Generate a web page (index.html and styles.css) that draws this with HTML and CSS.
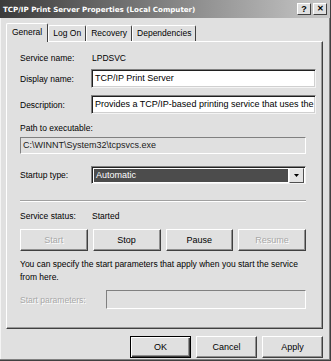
FILE: index.html
```html
<!DOCTYPE html>
<html lang="en">
<head>
    <meta charset="UTF-8">
    <meta name="viewport" content="width=device-width, initial-scale=1.0">
    <title>TCP/IP Print Server Properties</title>
    <link rel="stylesheet" href="styles.css">
</head>
<body>
    <div class="window">
        <div class="titlebar">
            <span class="title">TCP/IP Print Server Properties (Local Computer)</span>
            <div class="title-btns">
                <span class="tbtn">?</span>
                <span class="tbtn close">&#x2715;</span>
            </div>
        </div>

        <div class="tabs">
            <span class="tab active">General</span>
            <span class="tab">Log On</span>
            <span class="tab">Recovery</span>
            <span class="tab">Dependencies</span>
        </div>

        <div class="panel">
            <div class="row first">
                <span class="label">Service name:</span>
                <span class="value">LPDSVC</span>
            </div>
            <div class="row r-display">
                <span class="label">Display name:</span>
                <div class="field">TCP/IP Print Server</div>
            </div>
            <div class="row r-desc">
                <span class="label">Description:</span>
                <div class="field">Provides a TCP/IP-based printing service that uses the</div>
            </div>
            <div class="path-label">Path to executable:</div>
            <div class="field readonly">C:\WINNT\System32\tcpsvcs.exe</div>

            <div class="row r-startup">
                <span class="label">Startup type:</span>
                <div class="select">
                    <span class="select-text">Automatic</span>
                    <span class="select-btn">
                        <svg width="5" height="3" viewBox="0 0 5 3"><path d="M0 0h5L2.5 3z" fill="#000"/></svg>
                    </span>
                </div>
            </div>

            <div class="separator"></div>

            <div class="row r-status">
                <span class="label">Service status:</span>
                <span class="value">Started</span>
            </div>

            <div class="svc-buttons">
                <button class="btn disabled">Start</button>
                <button class="btn">Stop</button>
                <button class="btn">Pause</button>
                <button class="btn disabled">Resume</button>
            </div>

            <p class="hint">You can specify the start parameters that apply when you start the service from here.</p>

            <div class="row r-params">
                <span class="label disabled-text">Start parameters:</span>
                <div class="field readonly params"></div>
            </div>
        </div>

        <div class="footer">
            <button class="btn dlg default">OK</button>
            <button class="btn dlg">Cancel</button>
            <button class="btn dlg">Apply</button>
        </div>
    </div>
</body>
</html>
```

FILE: styles.css
```css
* {
    box-sizing: border-box;
}

body {
    margin: 0;
    background: #e0e0e0;
    font-family: 'Liberation Sans', Arial, sans-serif;
    font-size: 8.5px;
    color: #000;
}

.window {
    width: 331px;
    height: 361px;
    background: #e0e0e0;
    border-right: 1px solid #404040;
    border-bottom: 1px solid #404040;
    box-shadow: inset -1px -1px 0 #808080, inset 1px 1px 0 #f4f4f4;
}

/* title bar */
.titlebar {
    height: 18px;
    background: linear-gradient(to right, #3c3c3c 0%, #7a7a7a 45%, #c8c8c8 100%);
    display: flex;
    align-items: center;
    justify-content: space-between;
    padding: 0 3px 0 3px;
}

.title {
    color: #fff;
    font-family: 'DejaVu Sans', sans-serif;
    font-weight: bold;
    font-size: 7.1px;
}

.title-btns {
    display: flex;
    gap: 2px;
}

.tbtn {
    width: 14px;
    height: 12px;
    background: #e0e0e0;
    border-top: 1px solid #fff;
    border-left: 1px solid #fff;
    border-right: 1px solid #404040;
    border-bottom: 1px solid #404040;
    font-weight: bold;
    font-size: 9px;
    line-height: 10px;
    text-align: center;
    color: #000;
}

.tbtn.close {
    font-size: 8px;
}

/* tabs */
.tabs {
    display: flex;
    align-items: flex-end;
    height: 23px;
    margin: 0 0 0 6px;
    padding-top: 5px;
}

.tab {
    height: 16px;
    padding: 0 4px;
    font-size: 8.5px;
    line-height: 15px;
    border-left: 1px solid #fff;
    border-top: 1px solid #fff;
    border-right: 1px solid #404040;
    border-radius: 2px 2px 0 0;
    background: #e0e0e0;
}

.tab.active {
    height: 19px;
    padding: 1px 5px 0 5px;
    margin-bottom: -1px;
    position: relative;
    z-index: 1;
}

/* main panel */
.panel {
    margin: 0 7px 0 6px;
    height: 288px;
    border-top: 1px solid #fff;
    border-left: 1px solid #fff;
    border-right: 1px solid #404040;
    border-bottom: 1px solid #404040;
    box-shadow: inset -1px -1px 0 #9a9a9a;
    padding: 9px 16px 0 13px;
}

.row {
    display: flex;
    align-items: center;
}

.label {
    width: 71px;
    flex: none;
}

.value {
    padding-left: 1px;
}

.row.first {
    height: 14px;
}

.field {
    flex: 1;
    height: 19px;
    background: #fff;
    border-top: 1px solid #808080;
    border-left: 1px solid #808080;
    border-right: 1px solid #f4f4f4;
    border-bottom: 1px solid #f4f4f4;
    box-shadow: inset 1px 1px 0 #202020, inset -1px -1px 0 #d0d0d0;
    padding: 0 3px;
    line-height: 17px;
    white-space: nowrap;
    overflow: hidden;
    font-size: 9px;
}

.r-display {
    margin-top: 4px;
    margin-right: -10px;
}

.r-desc {
    margin-top: 7px;
    margin-right: -10px;
}

.path-label {
    margin-top: 7px;
    height: 14px;
    line-height: 14px;
}

.field.readonly {
    margin-top: 2px;
    height: 17px;
    line-height: 15px;
    background: #e0e0e0;
    color: #202020;
    border-color: #808080 #fff #fff #808080;
    box-shadow: none;
    padding-left: 2px;
}

.r-startup {
    margin-top: 12px;
}

.select {
    flex: 1;
    height: 18px;
    display: flex;
    border-top: 1px solid #808080;
    border-left: 1px solid #808080;
    border-right: 1px solid #f4f4f4;
    border-bottom: 1px solid #f4f4f4;
    box-shadow: inset 1px 1px 0 #202020;
    background: #fff;
    padding: 2px 1px 1px 2px;
}

.select-text {
    flex: 1;
    background: #4c4c4c;
    color: #fff;
    padding-left: 2px;
    line-height: 12px;
    font-size: 9px;
}

.select-btn {
    width: 15px;
    margin: -1px 0 -1px 1px;
    background: #e4e4e4;
    border-top: 1px solid #f4f4f4;
    border-left: 1px solid #f4f4f4;
    border-right: 1px solid #505050;
    border-bottom: 1px solid #505050;
    display: flex;
    align-items: center;
    justify-content: center;
}

.separator {
    margin-top: 16px;
    height: 2px;
    border-top: 1px solid #a0a0a0;
    border-bottom: 1px solid #fff;
}

.r-status {
    margin-top: 7px;
    height: 14px;
}

.svc-buttons {
    margin-top: 6px;
    display: flex;
    gap: 5px;
}

.btn {
    font-family: 'Liberation Sans', Arial, sans-serif;
    font-size: 9px;
    color: #000;
    background: #e0e0e0;
    height: 22px;
    padding: 0;
    border-top: 1px solid #fff;
    border-left: 1px solid #fff;
    border-right: 1px solid #404040;
    border-bottom: 1px solid #404040;
    box-shadow: inset -1px -1px 0 #909090;
    border-radius: 0;
}

.svc-buttons .btn {
    flex: 1;
}

.btn.disabled,
.disabled-text {
    color: #a8a8a8;
    text-shadow: 1px 1px 0 #fff;
}

.hint {
    margin: 7px 0 0 0;
    line-height: 13px;
}

.r-params {
    margin-top: 6px;
}

.label.disabled-text {
    width: 86px;
}

.field.params {
    margin-top: 0;
    height: 19px;
}

/* bottom buttons */
.footer {
    display: flex;
    justify-content: flex-end;
    gap: 5px;
    padding: 7px 7px 0 0;
}

.btn.dlg {
    width: 61px;
    height: 22px;
}

.btn.default {
    border: 1px solid #000;
    box-shadow: inset 1px 1px 0 #fff, inset -1px -1px 0 #404040, inset -2px -2px 0 #909090;
}
```
